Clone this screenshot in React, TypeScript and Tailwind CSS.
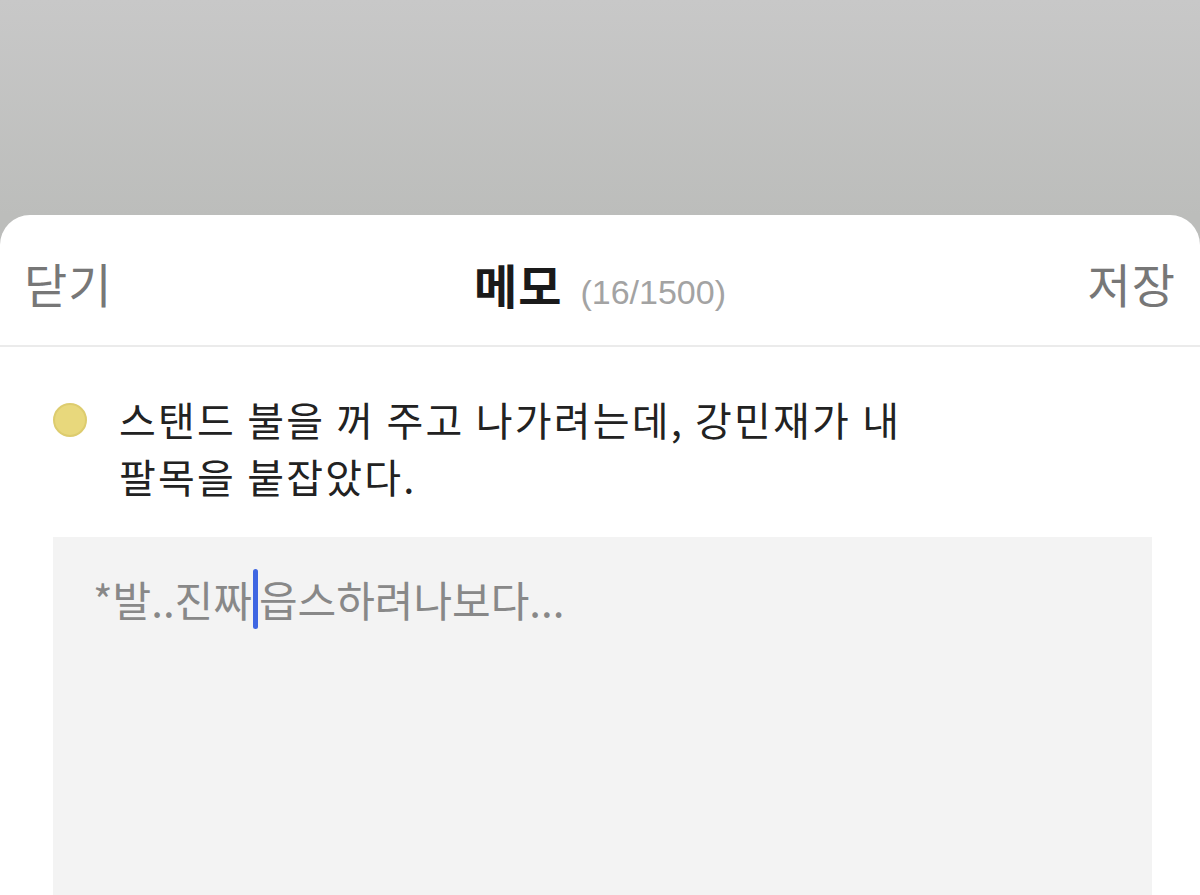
export default function App() {
  const font = { fontFamily: '"Noto Sans CJK KR", "Noto Sans", sans-serif' };
  return (
    <div className="h-[895px] w-[1200px] overflow-hidden bg-[#bcbdbb]" style={font}>
      <div className="h-[215px] bg-gradient-to-b from-[#c8c8c8] to-[#bcbdbb]" />
      <div className="h-[680px] rounded-t-[30px] bg-white">
        <header className="relative flex h-[132px] items-center justify-between border-b-2 border-[#ebebeb] px-[24px] pt-[4px]">
          <span className="text-[47px] leading-none tracking-[1px] text-[#777777]">닫기</span>
          <div className="absolute left-1/2 flex -translate-x-1/2 items-baseline gap-[18px] pt-[4px]">
            <span className="text-[47px] font-bold leading-none tracking-[1px] text-[#1a1a1a]">메모</span>
            <span className="text-[34px] leading-none text-[#a3a3a3]" style={{ fontFamily: '"Liberation Sans", sans-serif' }}>
              (16/1500)
            </span>
          </div>
          <span className="text-[47px] leading-none tracking-[1px] text-[#777777]">저장</span>
        </header>

        <div className="px-[53px] pt-[44px]">
          <div className="flex items-start gap-[32px]">
            <div className="mt-[12px] h-[34px] w-[34px] shrink-0 rounded-full border-2 border-[#ddcc6e] bg-[#e8d87c]" />
            <p className="text-[40px] leading-[57px] tracking-[2.2px] text-[#222222]">
              스탠드 불을 꺼 주고 나가려는데, 강민재가 내
              <br />
              팔목을 붙잡았다.
            </p>
          </div>

          <div className="mt-[32px] h-[400px] w-[1099px] bg-[#f3f3f3] px-[40px] pt-[32px]">
            <p className="flex items-center text-[42px] leading-[60px] text-[#888888]">
              <span>*발..진짜</span>
              <span className="mx-[1px] h-[60px] w-[5px] rounded-full bg-[#3f66e2]" />
              <span>읍스하려나보다...</span>
            </p>
          </div>
        </div>
      </div>
    </div>
  );
}
